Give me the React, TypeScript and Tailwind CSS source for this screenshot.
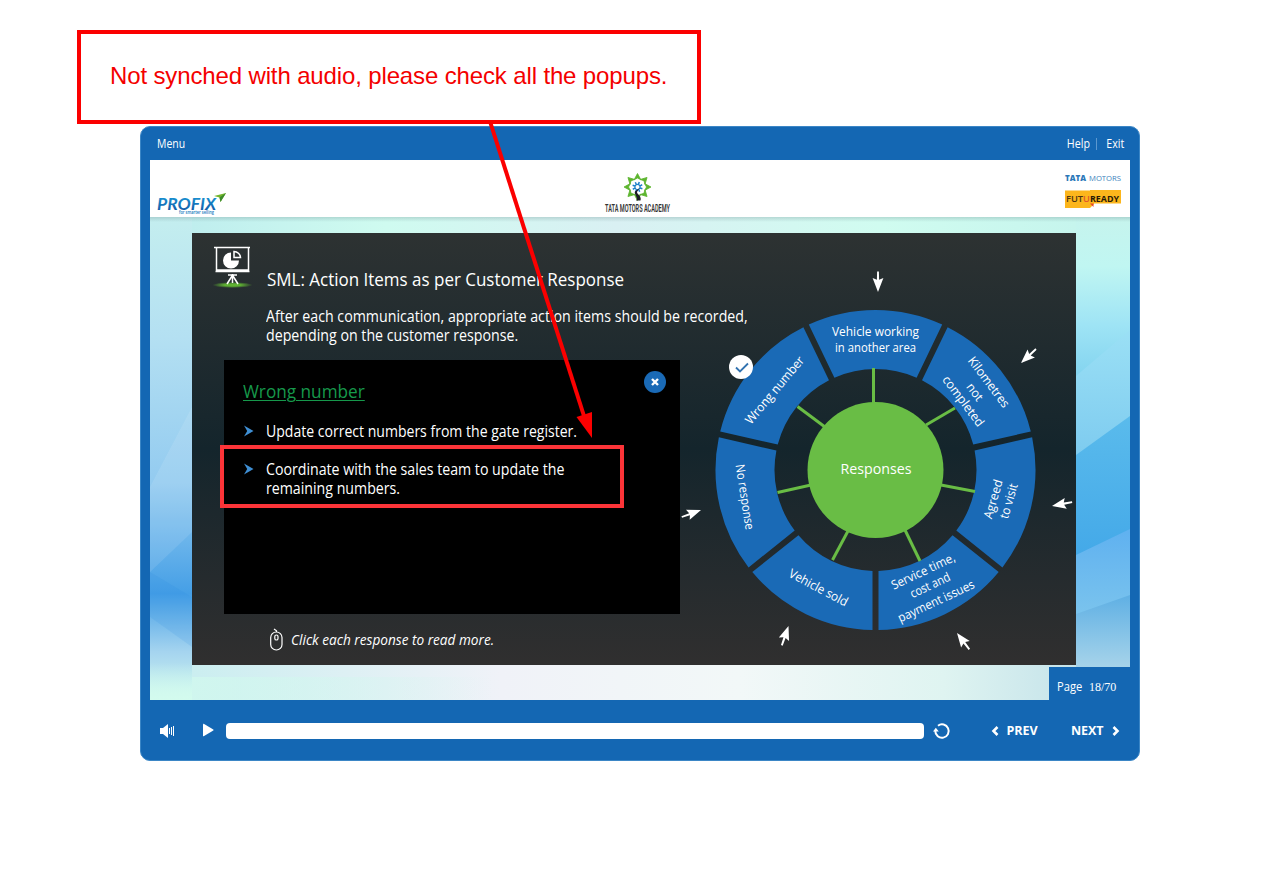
import React from "react";

const CX = 875.5;
const CY = 470;

function point(r: number, a: number) {
  return `${(CX + r * Math.sin(a)).toFixed(2)} ${(CY - r * Math.cos(a)).toFixed(2)}`;
}

// Ring slice whose two straight sides leave a gap of constant width.
function slicePath(i: number) {
  const outer = 160;
  const inner = 101;
  const half = 3;
  const step = (Math.PI * 2) / 7;
  const from = (i - 0.5) * step;
  const to = (i + 0.5) * step;
  const o = Math.asin(half / outer);
  const n = Math.asin(half / inner);
  return `M${point(outer, from + o)} A${outer} ${outer} 0 0 1 ${point(outer, to - o)} L${point(inner, to - n)} A${inner} ${inner} 0 0 0 ${point(inner, from + n)}Z`;
}

const spokes = [
  [873.5, 368, 873.5, 404],
  [926, 425, 955, 408],
  [941, 485, 975, 491.5],
  [905, 530, 920, 561],
  [848, 531, 832.5, 560],
  [811, 485, 777.5, 492.5],
  [825, 427, 797.5, 406.5],
];

const labels: [string, number, number, number, number][] = [
  ["Vehicle working", 875.5, 331.5, 0, 87],
  ["in another area", 875.5, 347.5, 0, 81],
  ["Wrong number", 774.5, 390, -50, 84],
  ["Kilometres", 989, 382, 53, 60],
  ["not", 975, 392, 53, 19],
  ["completed", 963.5, 401, 53, 60],
  ["Agreed", 993, 499, -74, 40],
  ["to visit", 1008.5, 501, -74, 36],
  ["Service time,", 923, 571, -25, 69],
  ["cost and", 930, 585, -25, 43],
  ["payment issues", 936, 601, -25, 83],
  ["Vehicle sold", 818.5, 587.5, 28, 65],
  ["No response", 745, 497, 81, 66],
];

const cursors = [
  [878, 292, 180],
  [1021, 363, -133],
  [1052, 506, -101],
  [957, 633, -37],
  [788.5, 626, 19],
  [701, 510, 70],
];

function Wheel() {
  return (
    <svg width="396" height="432" viewBox="680 233 396 432" className="block shrink-0">
      {Array.from({ length: 7 }, (_, i) => (
        <path key={i} d={slicePath(i)} fill="#1a6ab6" />
      ))}
      {spokes.map(([x1, y1, x2, y2], i) => (
        <line key={i} x1={x1} y1={y1} x2={x2} y2={y2} stroke="#69bd45" strokeWidth="3" />
      ))}
      <circle cx={CX} cy={CY} r="68" fill="#69bd45" />
      <text
        x="876"
        y="474"
        textAnchor="middle"
        textLength="71"
        lengthAdjust="spacingAndGlyphs"
        fill="#fff"
        className="font-['Open_Sans',sans-serif] text-[14.5px]"
      >
        Responses
      </text>
      {labels.map(([text, x, y, rotation, length]) => (
        <text
          key={text}
          x="0"
          y="4.5"
          textAnchor="middle"
          textLength={length}
          lengthAdjust="spacingAndGlyphs"
          fill="#fff"
          transform={`translate(${x} ${y}) rotate(${rotation})`}
          className="font-['Open_Sans',sans-serif] text-[12.5px]"
        >
          {text}
        </text>
      ))}
      {cursors.map(([x, y, rotation], i) => (
        <path
          key={i}
          d="M0 0L5.4 14L1.1 12.2L0.9 20.5H-0.9L-1.1 12.2L-5.4 14Z"
          fill="#fff"
          transform={`translate(${x} ${y}) rotate(${rotation})`}
        />
      ))}
      <circle cx="741" cy="367" r="12" fill="#fff" />
      <path d="M736 367.5L740 371.5L748 363.5" fill="none" stroke="#3273b0" strokeWidth="1.8" />
    </svg>
  );
}

function Backdrop() {
  return (
    <svg className="absolute inset-0" width="980" height="483" viewBox="0 0 980 483">
      <defs>
        <linearGradient id="left" x1="0" y1="0" x2="0" y2="1">
          <stop offset="0" stopColor="#c4eeef" />
          <stop offset="0.25" stopColor="#b4e0f2" />
          <stop offset="0.55" stopColor="#93cbf0" />
          <stop offset="0.78" stopColor="#459fe6" />
          <stop offset="0.9" stopColor="#a5d4ef" />
          <stop offset="1" stopColor="#d1f8ee" />
        </linearGradient>
        <linearGradient id="right" x1="0" y1="0" x2="0" y2="1">
          <stop offset="0" stopColor="#c6f4ed" />
          <stop offset="0.3" stopColor="#c0f6f2" />
          <stop offset="0.65" stopColor="#9fe4f5" />
          <stop offset="1" stopColor="#80d2ef" />
        </linearGradient>
        <linearGradient id="band1" x1="0" y1="0" x2="0" y2="1">
          <stop offset="0" stopColor="#9be0f5" />
          <stop offset="1" stopColor="#7ccaef" />
        </linearGradient>
        <linearGradient id="band2" x1="0" y1="0" x2="0" y2="1">
          <stop offset="0" stopColor="#5abbec" />
          <stop offset="1" stopColor="#43a8e8" />
        </linearGradient>
        <linearGradient id="band3" x1="0" y1="0" x2="0" y2="1">
          <stop offset="0" stopColor="#5fb1f0" />
          <stop offset="1" stopColor="#7bc4ed" />
        </linearGradient>
        <linearGradient id="band4" x1="0" y1="0" x2="0" y2="1">
          <stop offset="0" stopColor="#5fb0e4" />
          <stop offset="0.7" stopColor="#a8d4ea" />
          <stop offset="1" stopColor="#b9dcec" />
        </linearGradient>
        <linearGradient id="top" x1="0" y1="0" x2="1" y2="0">
          <stop offset="0" stopColor="#bfeeee" />
          <stop offset="0.22" stopColor="#cffbf0" />
          <stop offset="0.48" stopColor="#d9f0f3" />
          <stop offset="0.78" stopColor="#d0fcf0" />
          <stop offset="1" stopColor="#c6f5ed" />
        </linearGradient>
        <linearGradient id="bottom" x1="0" y1="0" x2="1" y2="0">
          <stop offset="0" stopColor="#cbeef0" />
          <stop offset="0.35" stopColor="#f0f2f8" />
          <stop offset="0.62" stopColor="#f2f8f8" />
          <stop offset="0.85" stopColor="#dff4f1" />
          <stop offset="1" stopColor="#c5e3ea" />
        </linearGradient>
        <linearGradient id="mint" x1="0" y1="0" x2="0" y2="1">
          <stop offset="0" stopColor="#d3fbee" stopOpacity="0" />
          <stop offset="1" stopColor="#d3fbee" />
        </linearGradient>
        <linearGradient id="mintFade" x1="0" y1="0" x2="1" y2="0">
          <stop offset="0" stopColor="#d1f8ee" />
          <stop offset="1" stopColor="#d1f8ee" stopOpacity="0" />
        </linearGradient>
        <linearGradient id="shade" x1="0" y1="0" x2="0" y2="1">
          <stop offset="0" stopColor="#6d8f90" stopOpacity="0.3" />
          <stop offset="1" stopColor="#6d8f90" stopOpacity="0" />
        </linearGradient>
      </defs>
      <rect width="926" height="483" fill="url(#left)" />
      <path d="M0 270L42 190V315L0 355Z" fill="#fff" opacity="0.1" />
      <path d="M0 355L42 380V430L0 400Z" fill="#1e83dc" opacity="0.12" />
      <rect x="926" width="54" height="165" fill="url(#right)" />
      <path d="M926 159L980 113V245H926Z" fill="url(#band1)" />
      <path d="M926 238L980 199V345H926Z" fill="url(#band2)" />
      <path d="M926 338L980 312V400H926Z" fill="url(#band3)" />
      <path d="M926 397L980 378V483H926Z" fill="url(#band4)" />
      <rect x="42" width="884" height="20" fill="url(#top)" />
      <rect x="42" y="446" width="884" height="37" fill="url(#bottom)" />
      <rect x="42" y="460" width="300" height="23" fill="url(#mintFade)" opacity="0.8" />
      <rect y="446" width="42" height="37" fill="url(#mint)" />
      <rect width="980" height="5" fill="url(#shade)" />
    </svg>
  );
}

function BoardIcon() {
  return (
    <svg width="42" height="44" viewBox="0 0 42 44" className="block">
      <defs>
        <radialGradient id="glow">
          <stop offset="0.4" stopColor="#5fb233" />
          <stop offset="1" stopColor="#5fb233" stopOpacity="0" />
        </radialGradient>
      </defs>
      <ellipse cx="20.500" cy="40" rx="20" ry="3" fill="url(#glow)" />
      <g fill="none" stroke="#fff" strokeWidth="1.5">
        <path d="M2 2.500H38M4.500 3V25H36.500V3M3.500 26.500H37.500M20.500 29V38M16 30H25M20 31L15 39M21 31L26 39" />
      </g>
      <path d="M19 7.500A8 8 0 1 0 27 15.500H19Z" fill="#fff" />
      <path d="M22 6.500V12.500H28.500A6.500 6.500 0 0 0 22 6.500Z" fill="none" stroke="#fff" strokeWidth="1.500" />
    </svg>
  );
}

function ProfixLogo() {
  return (
    <svg width="74" height="24" viewBox="0 0 74 24" className="block">
      <defs>
        <linearGradient id="profix" x1="0" y1="0" x2="0" y2="1">
          <stop offset="0" stopColor="#1aa4e0" />
          <stop offset="1" stopColor="#10509f" />
        </linearGradient>
      </defs>
      <text x="1" y="17.500" textLength="59" lengthAdjust="spacingAndGlyphs" fill="url(#profix)" className="font-['Lato',sans-serif] text-[17.5px] font-bold italic">
        PROFIX
      </text>
      <text x="23" y="21.500" textLength="35" lengthAdjust="spacingAndGlyphs" fill="#1478bd" className="font-['Open_Sans',sans-serif] text-[4.5px] font-semibold">
        for smarter selling
      </text>
      <path d="M70 1L58 4L63.500 5.500L64.500 10Z" fill="#72b62b" />
      <path d="M70 1L63.500 5.500L64.500 10Z" fill="#3c8a2d" />
    </svg>
  );
}

const petals = Array.from({ length: 8 }, (_, i) => i * 45);

function AcademyLogo() {
  return (
    <svg width="70" height="42" viewBox="0 0 70 42" className="block">
      <g transform="translate(34.500 14)">
        {petals.map((a) => (
          <path key={a} d="M-3.400 -7.200L0 -13.500L3.400 -7.200L0 -9Z" fill="#5db52f" stroke="#5db52f" strokeWidth="0.800" transform={`rotate(${a})`} />
        ))}
        {petals.map((a) => (
          <path key={a} d="M0 -5.200V-2.800" stroke="#1c7fc9" strokeWidth="1.500" transform={`rotate(${a + 20})`} />
        ))}
        <circle r="2.600" fill="#fff" stroke="#1c7fc9" strokeWidth="1.300" />
      </g>
      <path d="M33 27.500C36 25 30.500 21 32 18.500L36.500 15L34 19C34 21.500 39 23 37.500 27.500Z" fill="#1d1d24" />
      <text x="2" y="38.500" textLength="65" lengthAdjust="spacingAndGlyphs" fill="#333" className="font-['Roboto',sans-serif] text-[11px] font-semibold">
        TATA MOTORS ACADEMY
      </text>
    </svg>
  );
}

function BrandLogos() {
  return (
    <svg width="58" height="36" viewBox="0 0 58 36" className="block">
      <text x="1" y="6.800" textLength="21" lengthAdjust="spacingAndGlyphs" fill="#2b78b9" className="font-['Open_Sans',sans-serif] text-[8px] font-extrabold">
        TATA
      </text>
      <text x="25" y="6.800" textLength="32" lengthAdjust="spacingAndGlyphs" fill="#3b82bd" className="font-['Open_Sans',sans-serif] text-[8px]">
        MOTORS
      </text>
      <path d="M1 16.500H26V16H57V29.500H30V30L26 34H1Z" fill="#fcb61c" />
      <path d="M26 29.500H29.500V33Z" fill="#e5452c" />
      <text x="2" y="27.800" textLength="24" lengthAdjust="spacingAndGlyphs" fill="#4d3510" className="font-['Open_Sans',sans-serif] text-[9.500px] font-semibold">
        FUT<tspan fill="#e0582a">U</tspan>
      </text>
      <text x="26" y="27.800" textLength="29" lengthAdjust="spacingAndGlyphs" fill="#2a1a05" className="font-['Open_Sans',sans-serif] text-[9.500px] font-bold">
        READY
      </text>
    </svg>
  );
}

function Marker() {
  return (
    <svg width="10" height="12" viewBox="0 0 10 12" className="mt-[3px] block shrink-0">
      <path d="M0 0.500L9.500 6L0 11.500L3.200 6Z" fill="#3f8fd4" />
    </svg>
  );
}

function Popup() {
  return (
    <div className="ml-8 mt-[15px] h-[254px] w-[456px] bg-black pl-[19px] pr-[14px] pt-[11px]">
      <div className="flex justify-between">
        <h2 className="mt-[7px] origin-left scale-x-[0.955] whitespace-nowrap text-[18px] leading-[26px] text-[#16984b] underline decoration-1 underline-offset-[2px]">
          Wrong number
        </h2>
        <button className="flex size-[22px] items-center justify-center rounded-full bg-[#1a6ab6]">
          <svg width="8" height="8" viewBox="0 0 8 8">
            <path d="M1 1L7 7M7 1L1 7" stroke="#fff" strokeWidth="2.400" />
          </svg>
        </button>
      </div>
      <ul className="text-[15.500px] leading-[19px] text-white">
        <li className="mt-[18px] flex gap-[12px] pl-px">
          <Marker />
          <span className="origin-left scale-x-[0.906] whitespace-nowrap">Update correct numbers from the gate register.</span>
        </li>
        <li className="mt-[19px] flex gap-[12px] pl-px">
          <Marker />
          <span className="origin-left scale-x-[0.914] whitespace-nowrap">
            Coordinate with the sales team to update the
            <br />
            remaining numbers.
          </span>
        </li>
      </ul>
    </div>
  );
}

function Slide() {
  return (
    <section className="relative ml-[42px] mr-[54px] mt-[15px] flex h-[432px] bg-linear-to-b from-[#2d3232] via-[#14252c] to-[#302f2f]">
      <div className="w-[488px] shrink-0 text-white">
        <div className="flex h-[72px] pl-5 pt-[12px]">
          <BoardIcon />
          <h1 className="ml-[13px] mt-[21px] origin-left scale-x-[0.943] whitespace-nowrap text-[18px] leading-[26px]">
            SML: Action Items as per Customer Response
          </h1>
        </div>
        <p className="ml-[74px] mt-[2px] w-max origin-left scale-x-[0.916] whitespace-nowrap text-[15.500px] leading-[19px]">
          After each communication, appropriate action items should be recorded,
          <br />
          depending on the customer response.
        </p>
        <Popup />
        <div className="mt-[14px] flex items-center pl-[78px]">
          <svg width="13" height="24" viewBox="0 0 13 24" fill="none" stroke="#fff">
            <rect x="0.700" y="4" width="11.300" height="18" rx="5.600" strokeWidth="1.200" />
            <rect x="4.800" y="7" width="3.200" height="5" rx="1.600" strokeWidth="1.200" />
            <path d="M6.500 4V2.800L4 1" strokeWidth="1.200" />
          </svg>
          <p className="ml-2 origin-left scale-x-[0.94] whitespace-nowrap text-[14.500px] italic leading-6">Click each response to read more.</p>
        </div>
      </div>
      <Wheel />
    </section>
  );
}

function Controls() {
  return (
    <footer className="flex h-[61px] items-center text-white">
      <svg width="16" height="16" viewBox="0 0 16 16" className="ml-[10px] block">
        <path d="M0 5H3L8 1V15L3 11H0Z" fill="#fff" />
        <path d="M9.500 5V11M11.500 4V12M13.500 3V13" stroke="#fff" strokeWidth="1" />
      </svg>
      <svg width="11" height="14" viewBox="0 0 11 14" className="-mt-px ml-[27px] block">
        <path d="M0 1.200Q0 0.500 0.700 0.800L10.300 6.500Q10.800 7 10.300 7.500L0.700 13.200Q0 13.500 0 12.800Z" fill="#fff" />
      </svg>
      <div className="ml-[12px] mt-px h-4 w-[698px] rounded-[4px] bg-white" />
      <svg width="18" height="18" viewBox="0 0 18 18" className="ml-[9px] block">
        <path d="M2.300 9A6.700 6.700 0 1 0 5 3.700" fill="none" stroke="#fff" strokeWidth="2" />
        <path d="M0 9.500L2.800 5.800L5.800 9.500Z" fill="#fff" />
      </svg>
      <button className="ml-[40px] flex items-center gap-[7px] pt-px text-[12.500px] font-bold">
        <svg width="8" height="10" viewBox="0 0 8 10">
          <path d="M6.500 1L2.500 5L6.500 9" fill="none" stroke="#fff" strokeWidth="2.600" />
        </svg>
        <span className="w-8 whitespace-nowrap tracking-[-0.100px]">PREV</span>
      </button>
      <button className="ml-[33px] flex items-center gap-[9px] pt-px text-[12.500px] font-bold">
        <span className="w-8 whitespace-nowrap tracking-[-0.100px]">NEXT</span>
        <svg width="8" height="10" viewBox="0 0 8 10">
          <path d="M1.500 1L5.500 5L1.500 9" fill="none" stroke="#fff" strokeWidth="2.600" />
        </svg>
      </button>
    </footer>
  );
}

export default function App() {
  return (
    <main className="relative h-[886px] w-[1280px] overflow-hidden bg-white pt-[30px] font-['Open_Sans','Noto_Sans',sans-serif]">
      <div className="ml-[77px] flex h-[94px] w-[624px] items-center border-4 border-[#fb0000] pl-[29px]">
        <p className="whitespace-nowrap pb-[2px] font-['Liberation_Sans',Arial,sans-serif] text-[24px] tracking-[-0.135px] text-[#f40000]">
          Not synched with audio, please check all the popups.
        </p>
      </div>

      <div className="ml-[140px] mt-[2px] h-[635px] w-[1000px] rounded-[10px] border border-[#3b86c6] bg-[#1467b3] px-[9px]">
        <header className="flex h-[33px] items-center justify-between px-[7px] pt-px text-[12px] font-medium text-white">
          <span className="origin-left scale-x-[0.87]">Menu</span>
          <div className="flex items-center">
            <span className="origin-right scale-x-[0.89]">Help</span>
            <span className="mx-[6px] h-3 w-px bg-[#5c98cf]" />
            <span className="-mr-px origin-right scale-x-[0.89] pl-px">Exit</span>
          </div>
        </header>

        <div className="h-[540px] bg-white">
          <div className="relative flex h-[57px]">
            <div className="ml-[6px] mt-[32px]">
              <ProfixLogo />
            </div>
            <div className="ml-[373px] mt-[13px]">
              <AcademyLogo />
            </div>
            <div className="ml-[391px] mt-[14px]">
              <BrandLogos />
            </div>
          </div>
          <div className="relative h-[483px] pt-px">
            <Backdrop />
            <Slide />
            <div className="absolute bottom-0 right-0 flex h-[33px] w-[81px] items-center bg-[#1467b3] pl-[8px] pt-[6px] text-[12px] text-white">
              <span className="w-[32px] origin-left scale-x-[0.93]">Page</span>
              <span className="font-['Liberation_Serif',serif] text-[12px]">18/70</span>
            </div>
          </div>
        </div>

        <Controls />
      </div>

      <div className="absolute left-[220px] top-[445px] h-[63px] w-[404px] border-4 border-[#fc3438]" />
      <svg className="absolute left-[480px] top-[120px]" width="120" height="325" viewBox="480 120 120 325">
        <path d="M490.500 123L584 416" stroke="#fb0000" strokeWidth="4" />
        <path d="M592 438L576.500 417L592 412Z" fill="#fb0000" />
      </svg>
    </main>
  );
}
